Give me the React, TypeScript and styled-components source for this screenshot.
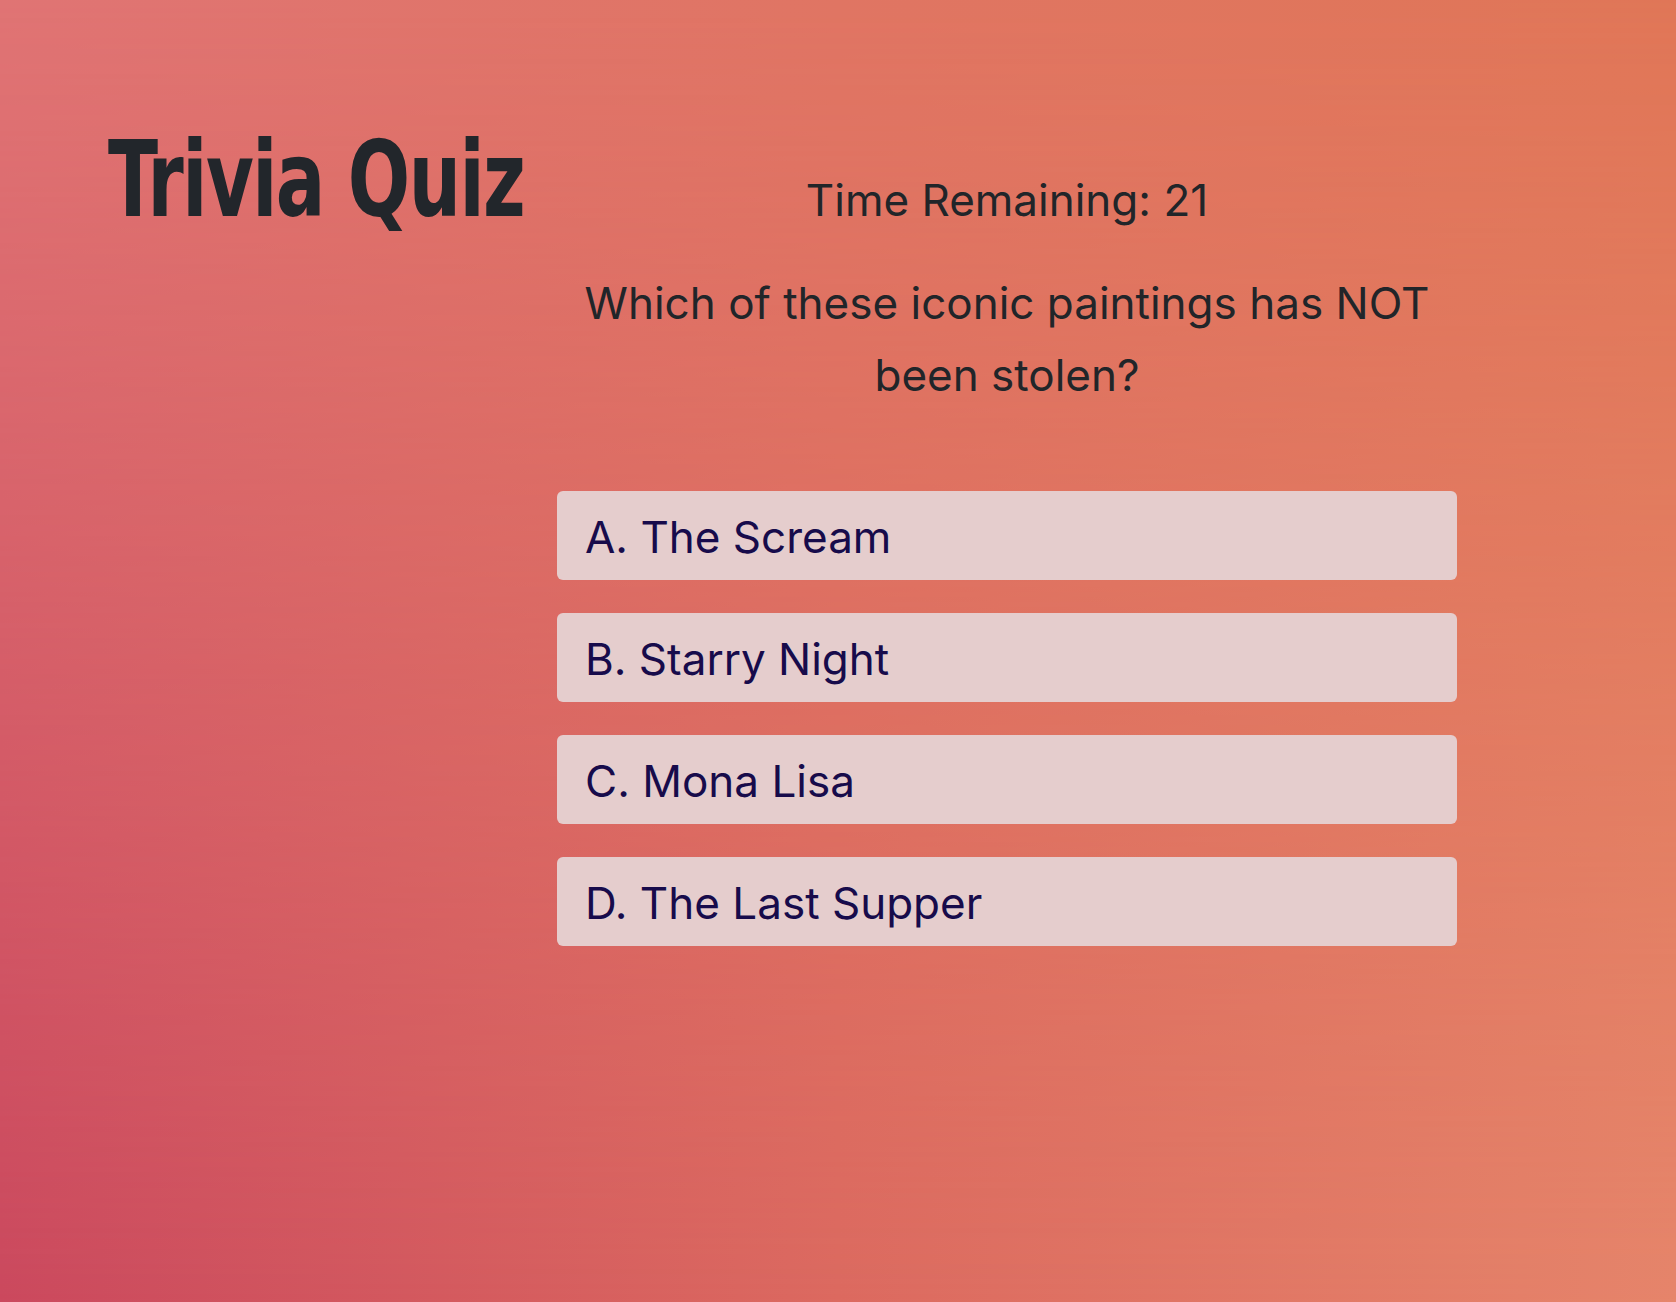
import React from "react";
import styled, { createGlobalStyle } from "styled-components";

const GlobalStyle = createGlobalStyle`
  html, body {
    margin: 0;
    padding: 0;
  }
  body {
    font-family: Inter, "Noto Sans", sans-serif;
    color: #212529;
  }
  * { box-sizing: border-box; }
`;

const Page = styled.div`
  position: relative;
  min-height: 100vh;
  height: 1302px;
  overflow: hidden;
  background: linear-gradient(to right, #cb495e 0%, #dc6a60 50%, #e6856b 100%);
  &::before {
    content: "";
    position: absolute;
    inset: 0;
    background: linear-gradient(to right, #e07474 0%, #e07563 50%, #e07657 100%);
    -webkit-mask-image: linear-gradient(to bottom, #000 0%, rgba(0,0,0,0.5) 50%, transparent 100%);
    mask-image: linear-gradient(to bottom, #000 0%, rgba(0,0,0,0.5) 50%, transparent 100%);
  }
`;

const Layout = styled.main`
  position: relative;
  display: grid;
  grid-template-columns: 557px 900px;
  align-items: start;
`;

const Title = styled.h1`
  margin: 127px 0 0 108px;
  font-family: "Liberation Sans Narrow", "DejaVu Sans Condensed", "Liberation Sans", sans-serif;
  font-weight: 700;
  font-size: 106px;
  line-height: 1;
  letter-spacing: -2px;
  color: #22262b;
  white-space: nowrap;
  transform: scaleX(0.77);
  transform-origin: left center;
`;

const Quiz = styled.section`
  display: flex;
  flex-direction: column;
  align-items: stretch;
  padding-top: 174px;
`;

const Timer = styled.div`
  font-size: 44px;
  line-height: 1.2;
  text-align: center;
  color: #212529;
`;

const Question = styled.h2`
  margin: 40px 0 0;
  font-weight: 400;
  font-size: 44px;
  line-height: 72px;
  text-align: center;
  color: #212529;
`;

const Answers = styled.div`
  display: flex;
  flex-direction: column;
  gap: 33px;
  margin-top: 80px;
`;

const Answer = styled.button`
  display: block;
  width: 100%;
  height: 89px;
  padding: 4px 28px 0;
  border: none;
  border-radius: 6px;
  background: #e5cdcd;
  color: #170b4b;
  font-family: Inter, "Noto Sans", sans-serif;
  font-size: 44px;
  line-height: 1.2;
  text-align: left;
  cursor: pointer;
`;

const answers = ["A. The Scream", "B. Starry Night", "C. Mona Lisa", "D. The Last Supper"];

export default function App() {
  return (
    <>
      <GlobalStyle />
      <Page>
        <Layout>
          <Title>Trivia Quiz</Title>
          <Quiz>
            <Timer>Time Remaining: 21</Timer>
            <Question>Which of these iconic paintings has NOT been stolen?</Question>
            <Answers>
              {answers.map((a) => (
                <Answer key={a}>{a}</Answer>
              ))}
            </Answers>
          </Quiz>
        </Layout>
      </Page>
    </>
  );
}
